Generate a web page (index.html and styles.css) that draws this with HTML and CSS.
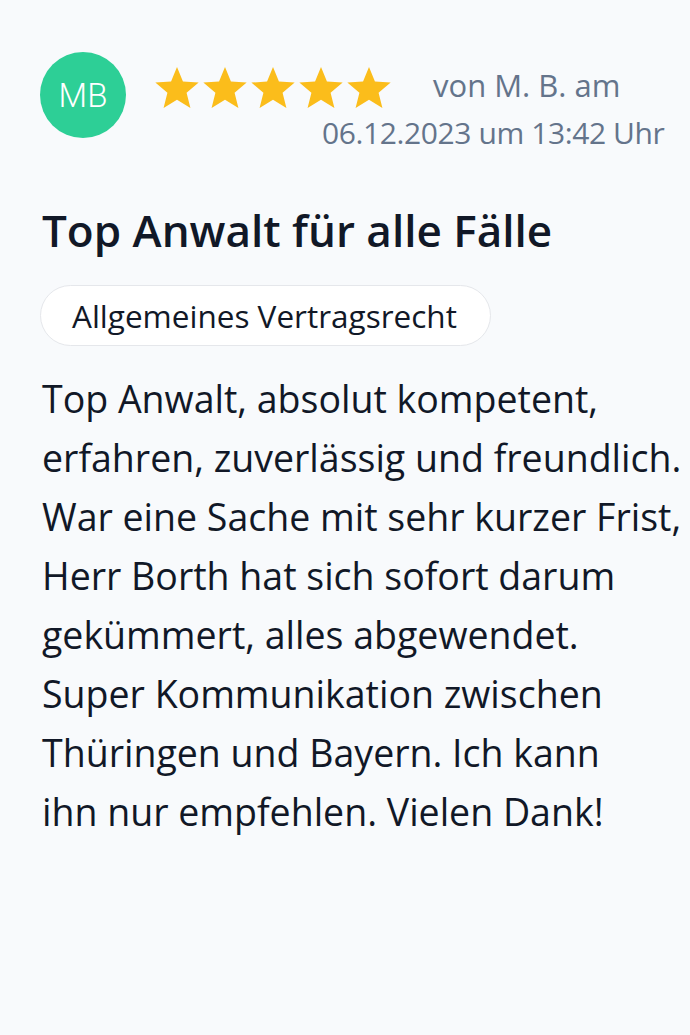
FILE: index.html
```html
<!DOCTYPE html>
<html lang="de">
<head>
<meta charset="utf-8">
<link rel="stylesheet" href="styles.css">
</head>
<body>
<main class="review">
  <header class="head">
    <div class="avatar">MB</div>
    <div class="meta">
      <div class="meta-row">
        <div class="stars">
          <svg class="star" viewBox="0 0 24 24"><path d="M12 1.5l3.1 7.6 8.2.6-6.3 5.3 2 8-7-4.3-7 4.3 2-8L.7 9.7l8.2-.6z"/></svg>
          <svg class="star" viewBox="0 0 24 24"><path d="M12 1.5l3.1 7.6 8.2.6-6.3 5.3 2 8-7-4.3-7 4.3 2-8L.7 9.7l8.2-.6z"/></svg>
          <svg class="star" viewBox="0 0 24 24"><path d="M12 1.5l3.1 7.6 8.2.6-6.3 5.3 2 8-7-4.3-7 4.3 2-8L.7 9.7l8.2-.6z"/></svg>
          <svg class="star" viewBox="0 0 24 24"><path d="M12 1.5l3.1 7.6 8.2.6-6.3 5.3 2 8-7-4.3-7 4.3 2-8L.7 9.7l8.2-.6z"/></svg>
          <svg class="star" viewBox="0 0 24 24"><path d="M12 1.5l3.1 7.6 8.2.6-6.3 5.3 2 8-7-4.3-7 4.3 2-8L.7 9.7l8.2-.6z"/></svg>
        </div>
        <span class="author">von M. B. am</span>
      </div>
      <div class="date">06.12.2023 um 13:42 Uhr</div>
    </div>
  </header>
  <h1 class="title">Top Anwalt für alle Fälle</h1>
  <span class="tag">Allgemeines Vertragsrecht</span>
  <p class="text">Top Anwalt, absolut kompetent,<br>erfahren, zuverlässig und freundlich.<br>War eine Sache mit sehr kurzer Frist,<br>Herr Borth hat sich sofort darum<br>gekümmert, alles abgewendet.<br>Super Kommunikation zwischen<br>Thüringen und Bayern. Ich kann<br>ihn nur empfehlen. Vielen Dank!</p>
</main>
</body>
</html>
```
FILE: styles.css
```css
html, body {
  margin: 0;
  background: #f8fafc;
}
body {
  font-family: "Open Sans", "Noto Sans", sans-serif;
  color: #111827;
}
.review {
  padding: 52px 0 0 40px;
}
.head {
  display: flex;
  align-items: flex-start;
  gap: 27px;
  height: 101px;
}
.avatar {
  width: 86px;
  height: 86px;
  border-radius: 50%;
  background: #2dcf96;
  color: #fff;
  font-family: "Roboto", sans-serif;
  font-weight: 300;
  font-size: 33px;
  display: flex;
  align-items: center;
  justify-content: center;
  flex: none;
}
.meta {
  padding-top: 12px;
  color: #64748b;
}
.meta-row {
  display: flex;
  align-items: center;
  gap: 40px;
  height: 46px;
}
.stars {
  display: flex;
}
.star {
  width: 48px;
  height: 46px;
  fill: #fbbd1b;
}
.author {
  font-size: 31px;
  line-height: 40px;
  margin-top: -4px;
}
.date {
  margin: 3px 0 0 169px;
  font-size: 30px;
  letter-spacing: -0.4px;
  line-height: 40px;
  white-space: nowrap;
}
.title {
  margin: 51px 0 0 2px;
  font-size: 44px;
  font-weight: 600;
  line-height: 52px;
  color: #111827;
}
.tag {
  display: block;
  width: fit-content;
  margin-top: 29px;
  padding: 0 33px 0 31px;
  height: 61px;
  line-height: 59px;
  box-sizing: border-box;
  border: 1px solid #e5e7eb;
  border-radius: 31px;
  background: #fff;
  font-size: 31.5px;
  color: #111827;
}
.text {
  margin: 23px 0 0 2px;
  font-size: 37.5px;
  line-height: 59px;
  color: #111827;
  white-space: nowrap;
}
```
